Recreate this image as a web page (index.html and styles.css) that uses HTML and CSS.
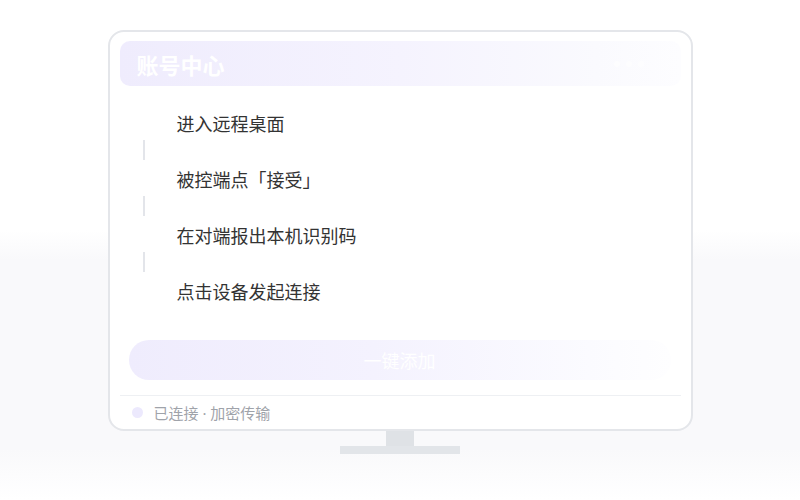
FILE: index.html
```html
<!DOCTYPE html>
<html lang="zh-CN">
<head>
  <meta charset="UTF-8" />
  <meta name="viewport" content="width=device-width, initial-scale=1" />
  <title>账号中心</title>
  <link rel="stylesheet" href="styles.css">
</head>
<body>
  <div class="monitor">
    <div class="screen">
      <div class="title-bar">
        <span class="title">账号中心</span>
        <span class="dots"><i></i><i></i><i></i></span>
      </div>

      <ul class="steps">
        <li class="step">进入远程桌面</li>
        <li class="link"></li>
        <li class="step">被控端点「接受」</li>
        <li class="link"></li>
        <li class="step">在对端报出本机识别码</li>
        <li class="link"></li>
        <li class="step">点击设备发起连接</li>
      </ul>

      <button class="add-btn">一键添加</button>

      <div class="status">
        <span class="dot"></span>
        <span>已连接 · 加密传输</span>
      </div>
    </div>
    <div class="neck"></div>
    <div class="base"></div>
  </div>
</body>
</html>
```

FILE: styles.css
```css
body {
  margin: 0;
  height: 500px;
  font-family: "Noto Sans CJK SC", "Noto Sans", sans-serif;
  background: linear-gradient(to bottom, #fff 0, #fff 46%, #f9f9fb 52%, #f9f9fb 90%, #fff 100%);
}
.monitor {
  display: flex;
  flex-direction: column;
  align-items: center;
  padding-top: 30px;
}
.screen {
  box-sizing: border-box;
  width: 585px;
  height: 401px;
  padding: 9px 10px 0 10px;
  background: #fff;
  border: 2px solid #e4e6ea;
  border-radius: 16px;
  display: flex;
  flex-direction: column;
}
.title-bar {
  height: 45px;
  border-radius: 10px;
  padding: 0 17px;
  display: flex;
  align-items: center;
  justify-content: space-between;
  background: linear-gradient(to right, #efecfd 0, #f5f3fe 50%, #fafafe 85%, #fdfdff 100%);
}
.title {
  color: #fff;
  font-size: 22px;
  font-weight: bold;
}
.dots {
  display: flex;
  gap: 6px;
  margin-right: 20px;
  opacity: 0.6;
}
.dots i {
  width: 6px;
  height: 6px;
  border-radius: 50%;
  background: #fff;
}
.steps {
  list-style: none;
  margin: 23px 0 0;
  padding: 0;
}
.step {
  height: 28px;
  line-height: 28px;
  padding-left: 57px;
  font-size: 18px;
  color: #333;
}
.link {
  width: 2px;
  height: 20px;
  margin: 3px 0 5px 23px;
  background: #e3e5ea;
}
.add-btn {
  margin: 35px 0 0 9px;
  width: 542px;
  height: 40px;
  border: none;
  border-radius: 20px;
  font-family: inherit;
  font-size: 18px;
  color: #fff;
  background: linear-gradient(to right, #efecfd 0, #f4f2fe 45%, #fbfbff 85%, #fefeff 100%);
}
.status {
  margin-top: 15px;
  border-top: 1px solid #eef0f3;
  height: 32px;
  display: flex;
  align-items: center;
  gap: 11px;
  padding-left: 12px;
  font-family: "Noto Sans", "Noto Sans CJK SC", sans-serif;
  font-size: 15px;
  color: #9fa3aa;
}
.dot {
  width: 11px;
  height: 11px;
  border-radius: 50%;
  background: #ece9fd;
}
.neck {
  width: 28px;
  height: 15px;
  background: #dfe2e6;
}
.base {
  width: 120px;
  height: 8px;
  background: #e2e5e9;
}
```
